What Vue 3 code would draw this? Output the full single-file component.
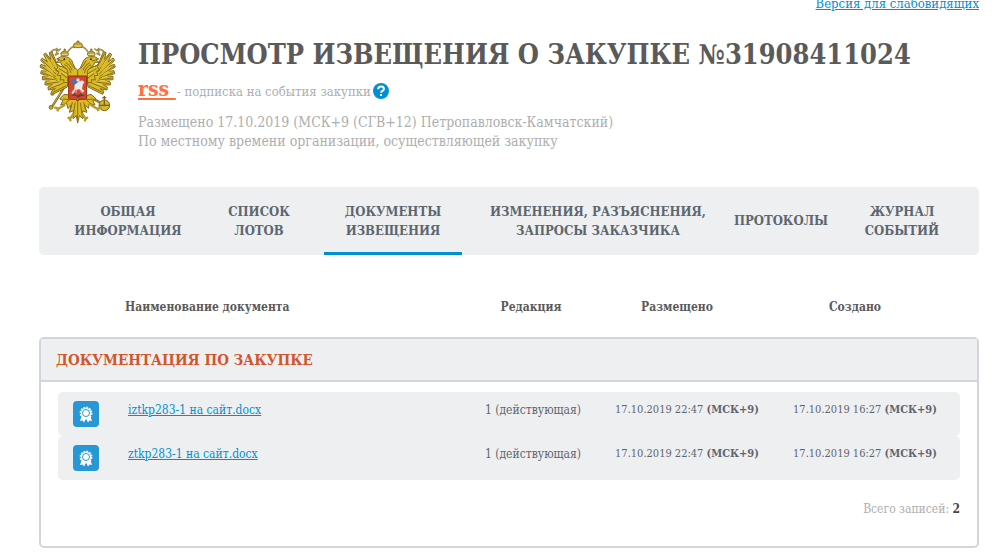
<template>
  <div class="page">
    <div class="topbar">
      <a href="#" class="link">Версия для слабовидящих</a>
    </div>

    <header class="header">
      <svg class="emblem" viewBox="26 30 234 252" aria-hidden="true">
        <!-- ribbons and crowns -->
        <g fill="none" stroke="#a3924d" stroke-width="5">
          <path d="M62 78 Q60 60 76 58 Q84 66 74 76 L86 70 M78 54 L84 62 L92 56" />
          <path d="M222 78 Q224 60 208 58 Q200 66 210 76 L198 70 M206 54 L200 62 L192 56" />
          <path d="M112 66 Q122 50 133 50 M173 66 Q163 50 152 50" />
        </g>
        <g fill="#c5a52b" stroke="#66521e" stroke-width="2">
          <path d="M131 53 Q125 39 140 38 V33 H146 V38 Q161 39 154 53 Z" />
          <path d="M93 77 Q87 66 101 64 V57 H105 V64 Q118 66 113 77 Z" />
          <path d="M173 77 Q167 66 181 64 V57 H185 V64 Q198 66 193 77 Z" />
        </g>
        <path d="M133 48 H153 M94 74 H112 M174 74 H192" stroke="#f0dfa0" stroke-width="3" />

        <!-- sceptre and orb -->
        <path d="M104 168 L64 232" stroke="#77621e" stroke-width="7" />
        <path d="M103 168 L64 232" stroke="#d6b32a" stroke-width="3" />
        <circle cx="66" cy="191" r="5" fill="#d8b52d" stroke="#604c18" stroke-width="2" />
        <circle cx="62" cy="232" r="6" fill="#c5a52b" stroke="#604c18" stroke-width="2" />
        <path d="M184 204 L214 220" stroke="#9c821d" stroke-width="8" />
        <circle cx="222" cy="226" r="16" fill="#d8b52d" stroke="#7b6622" stroke-width="3" />
        <path d="M207 226 H238 M222 212 V226 M222 198 V211 M216 203 H228" stroke="#756019" stroke-width="4" />

        <!-- wings -->
        <g id="wing">
          <path class="gold" d="M111 171 L67 193 L63 184 L75 176 L54 180 L53 171 L67 165 L44 165 L44 156 L60 151 L36 149 L36 139 L54 138 L31 131 L33 122 L50 124 L29 111 L32 103 L48 109 L31 91 L36 84 L51 96 L40 73 L46 69 L61 88 L57 67 L65 66 L74 87 Q75 101 87 108 Q102 111 116 116 Z" />
          <g class="feather">
            <path d="M46 74 L82 126 M35 90 L78 133 M33 108 L76 140 M35 127 L78 146 M40 144 L81 151 M48 161 L88 156 M58 176 L98 160 M68 187 L108 167" />
            <path d="M61 70 L83 111 L76 121 L86 124 L81 136 L92 137 L89 150 L101 149 L100 159 L114 156" />
            <path d="M79 103 Q96 112 113 120 M86 116 L113 132 M92 130 L114 146" />
          </g>
          <path class="shine" d="M49 83 L72 112 M39 101 L69 124 M38 118 L67 134 M43 136 L69 143 M50 153 L77 151 M61 169 L89 158 M90 111 L110 122 M96 126 L112 137" />
        </g>
        <use href="#wing" transform="translate(284 0) scale(-1 1)" />

        <!-- tail and talons -->
        <path class="gold" d="M119 195 L101 193 L88 207 L98 211 L91 225 L109 221 L113 236 L123 224 L117 247 L129 242 L128 266 L138 257 L142 279 L147 257 L158 266 L157 243 L170 247 L162 224 L174 235 L177 221 L194 225 L187 210 L197 206 L182 193 L163 198 Z" />
        <path class="feather" d="M98 207 L117 209 L107 218 M187 207 L168 209 L178 218 M142 215 V269 M134 218 L129 259 M150 218 L156 259 M126 217 L120 241 M160 217 L166 241" />
        <g fill="none" stroke="#b59a27" stroke-width="7">
          <path d="M104 224 L84 236 L72 232 M84 236 L81 244" />
          <path d="M180 224 L201 236 L215 233 M201 236 L205 243" />
          <path d="M130 251 L119 266 L112 262 M119 266 L121 274 M155 251 L166 266 L173 262 M166 266 L163 274" />
        </g>

        <!-- necks and heads -->
        <g id="head">
          <path class="gold" d="M142 164 L112 164 L113 128 Q113 118 103 112 Q91 106 91 97 L77 97 L88 89 L79 87 Q89 77 105 80 Q124 83 127 99 Q132 114 142 121 Z" />
          <path class="feather" d="M102 104 Q117 109 122 129 M106 98 Q119 103 126 121 M116 91 Q120 101 134 117 M89 92 H99" />
          <circle cx="102" cy="88" r="3" fill="#392a0d" />
        </g>
        <use href="#head" transform="translate(284 0) scale(-1 1)" />

        <!-- shield with rider -->
        <path d="M115 138 H169 V204 Q169 208 164 208 H149 L142 213 L135 208 H120 Q115 208 115 204 Z" fill="#d9452b" stroke="#83351b" stroke-width="3" />
        <path d="M123 151 L138 145 L145 155 L136 170 L124 162 Z" fill="#4f71a4" />
        <path d="M133 164 L145 155 L155 151 L163 157 L158 162 L155 176 L162 184 L157 187 L148 178 L136 179 L128 192 L123 189 L132 176 Z" fill="#eceaec" />
        <circle cx="143" cy="150" r="5" fill="#d9e0e8" />
        <path d="M146 154 L136 190 M149 181 L158 191" stroke="#f4e4dc" stroke-width="2" />
        <path d="M122 197 L132 190 L142 196 L153 190 L164 197 L151 199 L143 204 L135 197 Z" fill="#55493d" />
      </svg>

      <div class="header-text">
        <h1>ПРОСМОТР ИЗВЕЩЕНИЯ О ЗАКУПКЕ №31908411024</h1>
        <p class="subscribe">
          <a href="#" class="rss">rss&nbsp;</a>
          <span>- подписка на события закупки</span>
          <button type="button" class="help" aria-label="Справка">
            <svg viewBox="0 0 16 16" aria-hidden="true">
              <circle cx="8" cy="8" r="8" fill="#008fd3" />
              <path d="M5.2 6.2 C5.3 4.3 6.4 3.5 8 3.5 C9.8 3.5 10.9 4.5 10.9 5.9 C10.9 7.8 8.1 7.8 8.1 9.7" fill="none" stroke="#fff" stroke-width="2" />
              <rect x="7" y="11" width="2" height="2" fill="#fff" />
            </svg>
          </button>
        </p>
        <p class="meta">
          Размещено 17.10.2019 (МСК+9 (СГВ+12) Петропавловск-Камчатский)<br>
          По местному времени организации, осуществляющей закупку
        </p>
      </div>
    </header>

    <nav class="tabs">
      <a v-for="tab in tabs" :key="tab.lines[0]" href="#" :class="{ active: tab.active }">
        <span v-for="line in tab.lines" :key="line">{{ line }}</span>
      </a>
    </nav>

    <table class="docs">
      <thead>
        <tr>
          <th>Наименование документа</th>
          <th>Редакция</th>
          <th>Размещено</th>
          <th>Создано</th>
        </tr>
      </thead>
      <tbody>
        <tr class="group">
          <th colspan="5">ДОКУМЕНТАЦИЯ ПО ЗАКУПКЕ</th>
        </tr>
        <tr v-for="doc in docs" :key="doc.name" class="doc">
          <td>
            <button type="button" class="sign" aria-label="Подпись">
              <svg viewBox="0 0 26 26" aria-hidden="true">
                <path d="M9 14 L7 20 L9.5 19.6 L11 21.4 L13 17.4 L15 21.4 L16.5 19.6 L19 20 L17 14 Z" fill="#fff" />
                <circle cx="13" cy="12" r="5.6" fill="none" stroke="#fff" stroke-width="1.6" stroke-dasharray="1.8 1.1" />
                <circle cx="13" cy="12" r="5.2" fill="#fff" />
                <circle cx="13" cy="12" r="3.5" fill="#fff" stroke="#2797d5" stroke-width="1" />
              </svg>
            </button>
          </td>
          <td><a href="#" class="link">{{ doc.name }}</a></td>
          <td>{{ doc.version }}</td>
          <td class="date">{{ doc.placed }} <b>(МСК+9)</b></td>
          <td class="date">{{ doc.created }} <b>(МСК+9)</b></td>
        </tr>
        <tr class="total">
          <td colspan="5">Всего записей: <b>{{ docs.length }}</b></td>
        </tr>
      </tbody>
    </table>
  </div>
</template>

<script setup>
const tabs = [
  { lines: ['ОБЩАЯ', 'ИНФОРМАЦИЯ'] },
  { lines: ['СПИСОК', 'ЛОТОВ'] },
  { lines: ['ДОКУМЕНТЫ', 'ИЗВЕЩЕНИЯ'], active: true },
  { lines: ['ИЗМЕНЕНИЯ, РАЗЪЯСНЕНИЯ,', 'ЗАПРОСЫ ЗАКАЗЧИКА'] },
  { lines: ['ПРОТОКОЛЫ'] },
  { lines: ['ЖУРНАЛ', 'СОБЫТИЙ'] }
]

const docs = [
  { name: 'iztkp283-1 на сайт.docx', version: '1 (действующая)', placed: '17.10.2019 22:47', created: '17.10.2019 16:27' },
  { name: 'ztkp283-1 на сайт.docx', version: '1 (действующая)', placed: '17.10.2019 22:47', created: '17.10.2019 16:27' }
]
</script>

<style>
body {
  margin: 0;
  background: #fff;
}
</style>

<style scoped>
.page {
  padding: 0 18px 12px 39px;
  font-family: 'Roboto Slab', 'DejaVu Serif Condensed', 'DejaVu Serif', serif;
  font-size: 12px;
  line-height: 18px;
  color: #5d666f;
}

.link {
  color: #008fd3;
  text-decoration: underline;
}

.topbar {
  display: flex;
  justify-content: flex-end;
  align-items: flex-end;
  height: 13px;
  overflow: hidden;
  font-size: 13px;
}

.header {
  display: flex;
  gap: 21px;
  padding-top: 27px;
}

.emblem {
  flex: none;
  width: 78px;
  height: 84px;
}

.gold {
  fill: #dcba22;
  stroke: #80691f;
  stroke-width: 3;
}

.feather {
  fill: none;
  stroke: #84701f;
  stroke-width: 3;
}

.shine {
  fill: none;
  stroke: #f1db65;
  stroke-width: 2;
}

h1 {
  margin: 0;
  font-size: 27px;
  line-height: 30px;
  font-weight: bold;
  color: #5a5a5a;
  white-space: nowrap;
}

.subscribe {
  display: flex;
  align-items: baseline;
  gap: 1px;
  margin: 5px 0 0;
  font-size: 13px;
  line-height: 28px;
  color: #aeaeae;
}

.rss {
  font-size: 21px;
  line-height: 28px;
  font-weight: bold;
  color: #ff7043;
  text-decoration: underline;
}

.help {
  align-self: center;
  width: 16px;
  height: 16px;
  margin-left: 1px;
  padding: 0;
  border: none;
  background: none;
}

.help svg,
.sign svg {
  display: block;
}

.meta {
  margin: 7px 0 0;
  font-size: 14px;
  line-height: 19px;
  color: #aeaeae;
}

.tabs {
  display: grid;
  grid-template-columns: 132fr 130fr 138fr 272fr 94fr 148fr;
  margin-top: 36px;
  padding: 0 3px 0 23px;
  border-radius: 5px;
  background: #eeeff1;
}

.tabs a {
  display: flex;
  flex-direction: column;
  align-items: center;
  justify-content: center;
  height: 63px;
  min-width: 0;
  padding-top: 2px;
  border-bottom: 3px solid transparent;
  font-size: 13px;
  line-height: 19px;
  font-weight: bold;
  color: #5d666f;
  text-decoration: none;
  white-space: nowrap;
}

.tabs a.active {
  border-bottom-color: #008fd3;
}

.docs,
.docs thead,
.docs tbody {
  display: block;
}

.docs th,
.docs td {
  padding: 0;
}

.docs thead tr {
  display: grid;
  grid-template-columns: 1fr 136px 156px 200px;
  padding: 43px 24px 21px 86px;
  color: #5a5a5a;
}

.docs thead th:first-child {
  text-align: left;
}

.docs tbody {
  border: 2px solid #d2d6db;
  border-radius: 5px;
}

.group {
  display: block;
  padding: 11px 15px 10px;
  border-bottom: 2px solid #d2d6db;
  margin-bottom: 10px;
  background: #eeeff1;
  color: #d2562b;
}

.group th {
  display: block;
  font-size: 15px;
  line-height: 20px;
  text-align: left;
}

.doc {
  display: grid;
  grid-template-columns: 55px 1fr 136px 172px 184px;
  height: 35px;
  margin: 0 17px;
  padding: 9px 3px 0 15px;
  border-radius: 5px;
  background: #eeeff1;
  text-align: center;
}

.doc td:nth-child(-n+2) {
  text-align: left;
}

.doc .date {
  font-size: 11px;
}

.sign {
  display: block;
  width: 26px;
  height: 26px;
  padding: 0;
  border: none;
  border-radius: 4px;
  background: #2797d5;
}

.total {
  display: block;
  padding: 20px 17px 28px;
  color: #aeaeae;
}

.total td {
  display: block;
  text-align: right;
}

.total b {
  color: #3f464d;
}
</style>
